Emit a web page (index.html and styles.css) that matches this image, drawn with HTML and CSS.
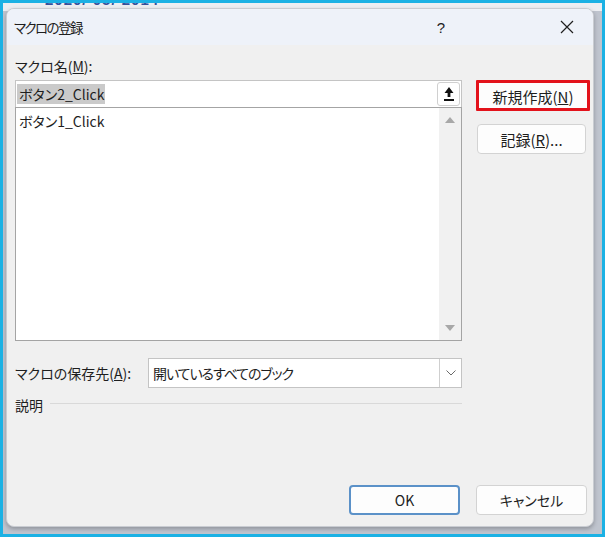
FILE: index.html
```html
<!DOCTYPE html>
<html lang="ja">
<head>
<meta charset="utf-8">
<title>マクロの登録</title>
<link rel="stylesheet" href="styles.css">
</head>
<body>
<div class="frame">
  <div class="backdrop-text">2020/ 05/ 2014</div>
  <div class="dialog">
    <div class="titlebar">
      <span class="title">マクロの登録</span>
      <span class="help">?</span>
      <span class="close">
        <svg width="14" height="14" viewBox="0 0 14 14"><path d="M1 1L13 13M13 1L1 13" stroke="#1f1f1f" stroke-width="1.2" fill="none"/></svg>
      </span>
    </div>
    <div class="body">
      <div class="top">
        <div class="left">
          <div class="label">マクロ名(<u>M</u>):</div>
          <div class="input">
            <span class="sel">ボタン2_Click</span>
            <span class="upbtn">
              <svg width="12" height="16" viewBox="0 0 12 16"><path d="M6 1L1.5 7H4.6V11H7.4V7H10.5Z" fill="#111"/><rect x="1" y="13" width="10" height="2" fill="#111"/></svg>
            </span>
          </div>
          <div class="list">
            <div class="items">
              <div class="item">ボタン1_Click</div>
            </div>
            <div class="scroll">
              <svg width="10" height="6" viewBox="0 0 10 6"><path d="M5 0L10 6H0Z" fill="#a8a8a8"/></svg>
              <svg width="10" height="6" viewBox="0 0 10 6"><path d="M0 0H10L5 6Z" fill="#a8a8a8"/></svg>
            </div>
          </div>
        </div>
        <div class="right">
          <div class="btn new">新規作成(<u>N</u>)</div>
          <div class="btn rec">記録(<u>R</u>)...</div>
        </div>
      </div>
      <div class="combo-row">
        <div class="combo-label">マクロの保存先(<u>A</u>):</div>
        <div class="combo">
          <span class="combo-text">開いているすべてのブック</span>
          <span class="combo-btn">
            <svg width="10" height="6" viewBox="0 0 10 6"><path d="M0.5 0.5L5 5L9.5 0.5" stroke="#6a6a6a" stroke-width="1" fill="none"/></svg>
          </span>
        </div>
      </div>
      <div class="desc-row">
        <span class="desc">説明</span>
        <span class="rule"></span>
      </div>
      <div class="footer">
        <div class="btn ok">OK</div>
        <div class="btn cancel">キャンセル</div>
      </div>
    </div>
  </div>
</div>
</body>
</html>
```
FILE: styles.css
```css
html, body {
  margin: 0;
  padding: 0;
  background: #ffffff;
}
body {
  font-family: "Noto Sans CJK JP", "Noto Sans", sans-serif;
  font-feature-settings: "palt";
  color: #1e1e1e;
  font-size: 14px;
}
.frame {
  position: relative;
  width: 605px;
  height: 537px;
  box-sizing: border-box;
  border: 3px solid #1bb1e4;
  background: linear-gradient(#eceef2 0, #eceef2 8px, #bfc4ce 8px);
  overflow: hidden;
  padding: 5px 0 0 3px;
}
.backdrop-text {
  position: absolute;
  left: 42px;
  top: -11px;
  font-family: "Liberation Sans", sans-serif;
  font-size: 15px;
  line-height: 15px;
  font-weight: bold;
  color: #34509a;
  letter-spacing: 1px;
}
.dialog {
  position: relative;
  width: 588px;
  height: 519px;
  box-sizing: border-box;
  background: #f0f0f0;
  border: 1px solid #c9ccd2;
  border-radius: 8px;
  box-shadow: 0 2px 4px rgba(0, 0, 0, 0.25);
  display: flex;
  flex-direction: column;
  overflow: hidden;
}
.titlebar {
  height: 36px;
  background: #eef2f9;
  display: flex;
  align-items: center;
  padding-left: 7px;
  flex-shrink: 0;
}
.title {
  flex: 1;
  font-size: 13.5px;
  letter-spacing: -1.6px;
  line-height: 20px;
}
.help {
  width: 20px;
  text-align: center;
  font-family: "Liberation Sans", sans-serif;
  font-size: 15px;
  margin-right: 104px;
}
.close {
  width: 24px;
  height: 20px;
  display: flex;
  align-items: center;
  justify-content: center;
  margin-right: 14px;
}
.body {
  flex: 1;
  display: flex;
  flex-direction: column;
  padding: 0 3px 11px 8px;
}
.top {
  display: flex;
  gap: 14px;
}
.left {
  width: 447px;
  flex-shrink: 0;
  display: flex;
  flex-direction: column;
}
.label {
  line-height: 20px;
  margin-top: 11px;
  margin-bottom: 4px;
}
.input {
  height: 27px;
  box-sizing: border-box;
  background: #ffffff;
  border: 1px solid #c4c4c4;
  border-bottom: none;
  display: flex;
  align-items: center;
  padding-left: 1px;
}
.sel {
  flex: 0 0 auto;
  background: #cacaca;
  line-height: 20px;
  padding: 0 1px 0 2px;
}
.upbtn {
  margin-left: auto;
  margin-right: 1px;
  width: 23px;
  height: 24px;
  box-sizing: border-box;
  border: 1px solid #d0d0d0;
  border-radius: 3px;
  background: #ffffff;
  display: flex;
  align-items: center;
  justify-content: center;
}
.list {
  height: 234px;
  box-sizing: border-box;
  background: #ffffff;
  border: 1px solid #a4a4a4;
  display: flex;
}
.items {
  flex: 1;
  padding: 3px 0 0 3px;
}
.item {
  line-height: 20px;
}
.scroll {
  width: 22px;
  background: #f1f1f1;
  display: flex;
  flex-direction: column;
  justify-content: space-between;
  align-items: center;
  padding: 9px 0 9px;
}
.right {
  display: flex;
  flex-direction: column;
  padding-top: 35px;
}
.btn {
  box-sizing: border-box;
  display: flex;
  align-items: center;
  justify-content: center;
  background: #fdfdfd;
  border: 1px solid #d3d3d3;
  border-radius: 4px;
  font-size: 14px;
}
.new {
  width: 114px;
  height: 31px;
  border: 3px solid #e3121b;
  border-radius: 1px;
  font-size: 15px;
  padding-top: 1px;
}
.rec {
  width: 109px;
  height: 30px;
  margin-top: 13px;
  margin-left: 1px;
  font-size: 15px;
}
.combo-row {
  display: flex;
  align-items: center;
  margin-top: 17px;
}
.combo-label {
  width: 133px;
}
.combo {
  width: 314px;
  height: 30px;
  box-sizing: border-box;
  background: #ffffff;
  border: 1px solid #c4c4c4;
  display: flex;
  align-items: center;
}
.combo-text {
  flex: 1;
  padding-left: 4px;
  letter-spacing: -1.1px;
}
.combo-btn {
  width: 21px;
  height: 28px;
  border-left: 1px solid #cfcfcf;
  display: flex;
  align-items: center;
  justify-content: center;
}
.desc-row {
  display: flex;
  align-items: center;
  margin-top: 7px;
  width: 447px;
}
.desc {
  line-height: 20px;
  margin-right: 7px;
}
.rule {
  flex: 1;
  height: 1px;
  background: #d9d9d9;
  margin-top: -3px;
}
.footer {
  margin-top: auto;
  display: flex;
  justify-content: flex-end;
  gap: 16px;
  margin-right: 3px;
}
.ok, .cancel {
  width: 111px;
  height: 30px;
}
.ok {
  border: 2px solid #5b91c8;
}
```
